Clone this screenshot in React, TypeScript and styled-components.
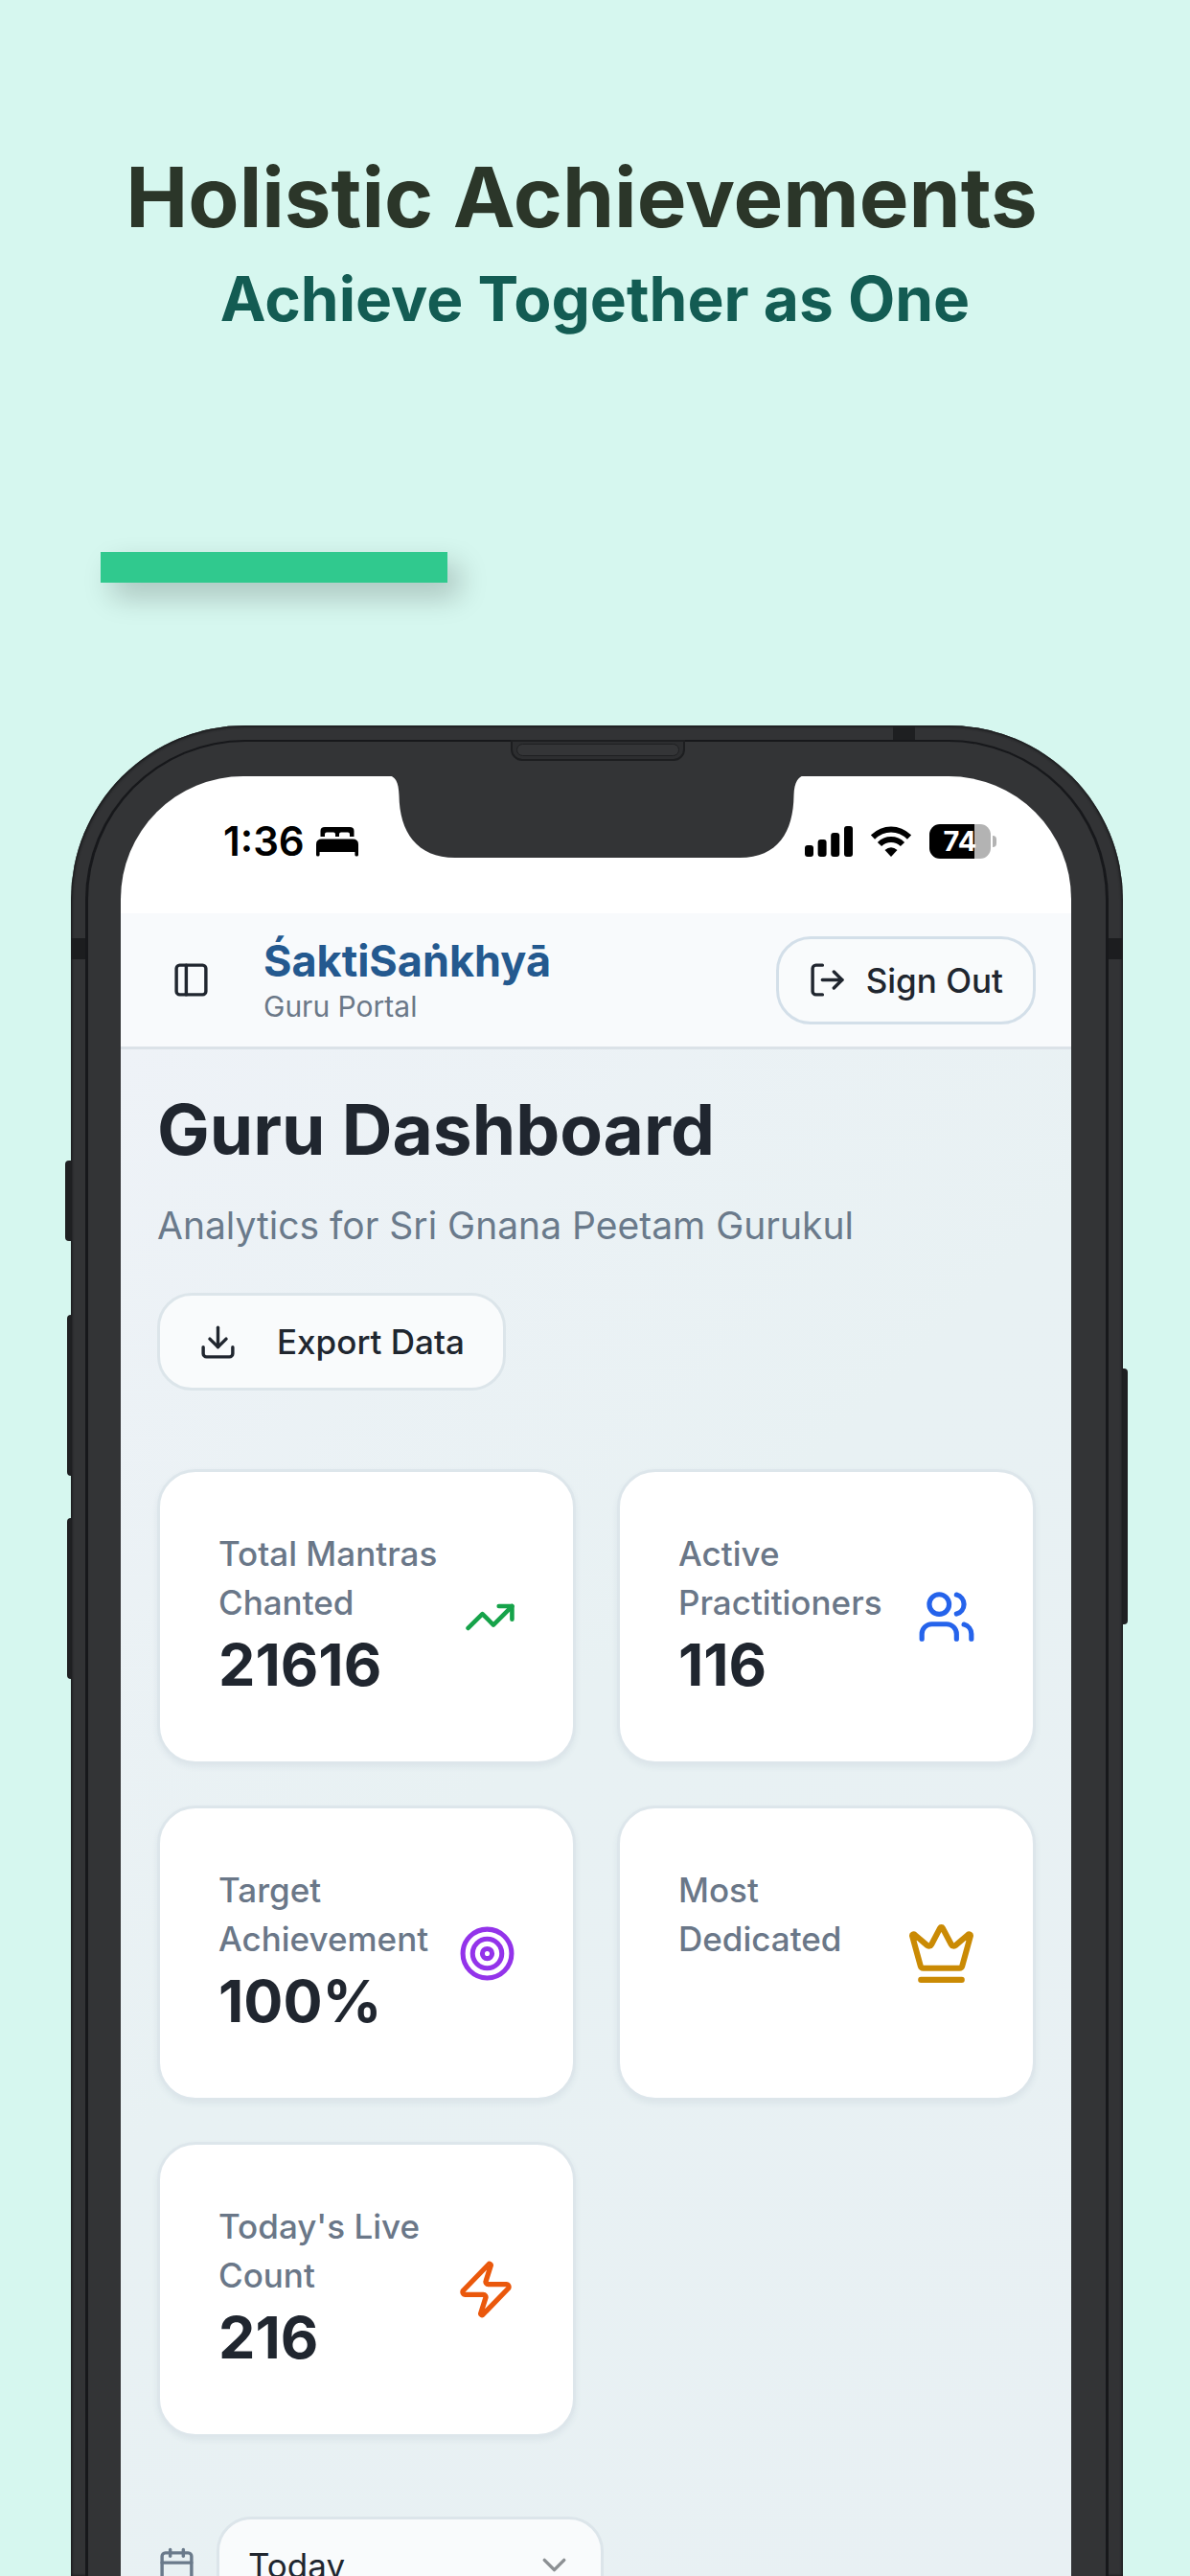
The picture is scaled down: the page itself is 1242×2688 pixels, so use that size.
import React from "react";
import styled, { createGlobalStyle } from "styled-components";
import {
  Calendar,
  ChevronDown,
  Crown,
  Download,
  LogOut,
  PanelLeft,
  Target,
  TrendingUp,
  Users,
  Zap,
  type LucideIcon,
} from "lucide-react";

const GlobalStyle = createGlobalStyle`
  * { box-sizing: border-box; }
  html, body, #root { margin: 0; height: 100%; }
  body {
    background: #d6f7ef;
    font-family: Inter, "Liberation Sans", sans-serif;
    color: #20262f;
  }
  h1, h2, p { margin: 0; }
  button, select { font: inherit; color: inherit; margin: 0; cursor: pointer; }
`;

const Page = styled.main`
  display: flex;
  flex-direction: column;
  height: 100vh;
  overflow: hidden;
  background: #d6f7ef;
`;

const Hero = styled.header`
  display: flex;
  flex-direction: column;
  align-items: center;
  padding-top: 152px;
`;

const HeroTitle = styled.h1`
  padding-right: 28px;
  font-size: 87px;
  line-height: 108px;
  font-weight: 700;
  color: #2b3629;
  white-space: nowrap;
`;

const HeroSubtitle = styled.p`
  font-size: 64px;
  line-height: 104px;
  font-weight: 700;
  color: #135c53;
  white-space: nowrap;
`;

const Accent = styled.div`
  width: 362px;
  height: 32px;
  margin: 212px 0 149px 105px;
  background: #30c98e;
  box-shadow: 12px 14px 30px rgba(0, 0, 0, 0.22);
`;

const Phone = styled.section`
  position: relative;
  flex: 1;
  min-height: 0;
  display: flex;
  margin: 0 70px 0 74px;
  padding: 15px 15px 0;
  border-radius: 182px 182px 0 0;
  background: #323335;
  box-shadow: inset 1px 1px 3px #17181a, inset -1px 0 3px #17181a;
`;

const Bezel = styled.div`
  flex: 1;
  min-width: 0;
  display: flex;
  padding: 36px 36px 0 34px;
  border: solid #17181b;
  border-width: 2px 3px 0;
  border-radius: 167px 167px 0 0;
  background: #333436;
`;

const Screen = styled.div`
  flex: 1;
  min-width: 0;
  display: flex;
  flex-direction: column;
  overflow: hidden;
  border-radius: 128px 128px 0 0;
  background: #ffffff;
`;

const SideKey = styled.span<{ $side: "left" | "right"; $top: number; $height: number; $depth: number }>`
  position: absolute;
  ${(p) => p.$side}: -${(p) => p.$depth}px;
  top: ${(p) => p.$top}px;
  width: ${(p) => p.$depth}px;
  height: ${(p) => p.$height}px;
  border-radius: ${(p) => (p.$side === "left" ? "4px 0 0 4px" : "0 4px 4px 0")};
  background: #1f2022;
`;

const SideBand = styled.span<{ $side: "left" | "right" }>`
  position: absolute;
  ${(p) => p.$side}: 0;
  top: 222px;
  width: 15px;
  height: 22px;
  background: #1c1d1f;
`;

const TopBand = styled.span`
  position: absolute;
  top: 1px;
  right: 217px;
  width: 23px;
  height: 14px;
  background: #1e1f21;
`;

const Speaker = styled.span`
  position: absolute;
  top: 15px;
  left: 50%;
  width: 182px;
  height: 22px;
  margin-left: -90px;
  border: 2px solid #1d1e20;
  border-radius: 0 0 12px 12px;
  background: #2d2e30;

  &::after {
    content: "";
    position: absolute;
    inset: 2px 4px 3px;
    border: 1px solid #1f2022;
    border-radius: 7px;
    background: #343537;
  }
`;

const Notch = styled.svg`
  position: absolute;
  top: 51px;
  left: 50%;
  width: 440px;
  height: 88px;
  margin-left: -220px;
`;

const StatusBar = styled.div`
  flex: none;
  display: flex;
  align-items: center;
  justify-content: space-between;
  height: 143px;
  padding: 0 84px 8px 107px;
  color: #000000;
`;

const StatusGroup = styled.div<{ $gap: number }>`
  display: flex;
  align-items: center;
  gap: ${(p) => p.$gap}px;
`;

const Clock = styled.span`
  font-size: 42px;
  line-height: 48px;
  font-weight: 600;
`;

const Battery = styled.span`
  position: relative;
  display: flex;
  align-items: center;
  justify-content: center;
  width: 64px;
  height: 36px;
  border-radius: 11px;
  background: linear-gradient(to right, #000000 74%, #b3b3b3 74%);
  color: #ffffff;
  font-size: 29px;
  line-height: 36px;
  font-weight: 700;

  &::after {
    content: "";
    position: absolute;
    right: -6px;
    top: 12px;
    width: 4px;
    height: 12px;
    border-radius: 0 4px 4px 0;
    background: #b3b3b3;
  }
`;

const AppBar = styled.div`
  flex: none;
  display: flex;
  align-items: center;
  justify-content: space-between;
  height: 142px;
  padding: 0 37px 0 53px;
  border-bottom: 3px solid #dbe2e8;
  background: #f8fafc;
`;

const AppBarStart = styled.div`
  display: flex;
  align-items: center;
  gap: 55px;
`;

const IconButton = styled.button`
  display: flex;
  padding: 0;
  border: 0;
  background: none;
`;

const Brand = styled.p`
  font-size: 45px;
  line-height: 54px;
  font-weight: 700;
  color: #24598f;
`;

const BrandNote = styled.p`
  font-size: 30px;
  line-height: 40px;
  color: #6b7888;
`;

const OutlineButton = styled.button<{ $height: number; $gap: number; $padding: string; $line: string }>`
  display: inline-flex;
  align-items: center;
  gap: ${(p) => p.$gap}px;
  height: ${(p) => p.$height}px;
  padding: ${(p) => p.$padding};
  border: 3px solid ${(p) => p.$line};
  border-radius: 36px;
  background: #f9fbfc;
  font-size: 35px;
  line-height: 50px;
  font-weight: 500;
  white-space: nowrap;
`;

const Content = styled.div`
  flex: 1;
  min-height: 0;
  padding: 35px 37px 0 38px;
  background: linear-gradient(135deg, #eef2f7 0%, #e8f1f3 45%, #e8f0f3 100%);
`;

const PageTitle = styled.h2`
  font-size: 73px;
  line-height: 98px;
  font-weight: 700;
`;

const PageNote = styled.p`
  margin: 22px 0 42px;
  font-size: 39px;
  line-height: 57px;
  color: #6a7a8b;
`;

const StatGrid = styled.div`
  display: grid;
  grid-template-columns: 1fr 1fr;
  gap: 43px;
  margin: 82px 0 83px;
`;

const StatCard = styled.article`
  display: flex;
  align-items: center;
  justify-content: space-between;
  gap: 12px;
  min-height: 308px;
  padding: 60px 59px 60px 61px;
  border: 3px solid #dde6eb;
  border-radius: 40px;
  background: #ffffff;
  box-shadow: 0 3px 6px rgba(60, 90, 110, 0.07);

  svg { flex: none; }
`;

const StatText = styled.div`
  align-self: flex-start;
  min-width: 0;
`;

const StatLabel = styled.p`
  font-size: 35px;
  line-height: 51px;
  font-weight: 500;
  color: #6a7788;
`;

const StatValue = styled.p`
  font-size: 61px;
  line-height: 78px;
  font-weight: 700;
`;

const FilterRow = styled.div`
  display: flex;
  align-items: center;
  gap: 21px;
  color: #6a7a8b;
`;

const SelectBox = styled.div`
  position: relative;
  width: 404px;

  svg {
    position: absolute;
    right: 31px;
    top: 30px;
    color: #8c9093;
    pointer-events: none;
  }
`;

const Select = styled.select`
  appearance: none;
  width: 100%;
  height: 102px;
  padding: 0 30px;
  border: 3px solid #dce5ea;
  border-radius: 36px;
  background: #f9fbfc;
  color: #20262f;
  font-size: 35px;
`;

const BedIcon = () => (
  <svg width="44" height="34" viewBox="0 0 44 34" fill="currentColor" aria-hidden="true">
    <path d="M4.500 12V6Q4.500 2 9 2H35Q39.500 2 39.500 6V12H35V9.500Q35 7.500 33 7.500H26Q24 7.500 24 9.500V12H20V9.500Q20 7.500 18 7.500H11Q9 7.500 9 9.500V12Z" />
    <path d="M0 20Q0 14.500 6 14.500H38Q44 14.500 44 20V31Q44 32.500 42.200 32.500T40.400 31V28H3.600V31Q3.600 32.500 1.800 32.500T0 31Z" />
  </svg>
);

const SignalIcon = () => (
  <svg width="50" height="34" viewBox="0 0 50 34" fill="currentColor" aria-hidden="true">
    <rect x="0" y="21" width="9" height="12" rx="3" />
    <rect x="13.600" y="15" width="9" height="18" rx="3" />
    <rect x="27.200" y="8" width="9" height="25" rx="3" />
    <rect x="41" y="1" width="9" height="32" rx="3" />
  </svg>
);

const WifiIcon = () => (
  <svg width="42" height="34" viewBox="0 0 42 34" fill="none" stroke="currentColor" strokeWidth="6" aria-hidden="true">
    <path d="M2 12.500Q10.500 4.500 21 4.500T40 12.500" />
    <path d="M9 20Q14 15 21 15T33 20" />
    <path d="M14.500 26Q21 20.500 27.500 26L21 33Z" fill="currentColor" stroke="none" />
  </svg>
);

type Stat = { label: string; value?: string; icon: LucideIcon; size: number; color: string };

const stats: Stat[] = [
  { label: "Total Mantras Chanted", value: "21616", icon: TrendingUp, size: 55, color: "#16a34a" },
  { label: "Active Practitioners", value: "116", icon: Users, size: 62, color: "#2563eb" },
  { label: "Target Achievement", value: "100%", icon: Target, size: 61, color: "#9333ea" },
  { label: "Most Dedicated", icon: Crown, size: 73, color: "#ca8a04" },
  { label: "Today's Live Count", value: "216", icon: Zap, size: 64, color: "#ea580c" },
];

export default function App() {
  return (
    <>
      <GlobalStyle />
      <Page>
        <Hero>
          <HeroTitle>Holistic Achievements</HeroTitle>
          <HeroSubtitle>Achieve Together as One</HeroSubtitle>
        </Hero>
        <Accent />
        <Phone>
          <SideKey $side="left" $top={454} $height={84} $depth={6} />
          <SideKey $side="left" $top={615} $height={168} $depth={4} />
          <SideKey $side="left" $top={827} $height={168} $depth={4} />
          <SideKey $side="right" $top={671} $height={267} $depth={5} />
          <SideBand $side="left" />
          <SideBand $side="right" />
          <TopBand />
          <Bezel>
            <Screen>
              <StatusBar>
                <StatusGroup $gap={12}>
                  <Clock>1:36</Clock>
                  <BedIcon />
                </StatusGroup>
                <StatusGroup $gap={19}>
                  <SignalIcon />
                  <WifiIcon />
                  <Battery>74</Battery>
                </StatusGroup>
              </StatusBar>
              <AppBar>
                <AppBarStart>
                  <IconButton type="button" aria-label="Toggle sidebar">
                    <PanelLeft size={41} />
                  </IconButton>
                  <div>
                    <Brand>ŚaktiSaṅkhyā</Brand>
                    <BrandNote>Guru Portal</BrandNote>
                  </div>
                </AppBarStart>
                <OutlineButton type="button" $height={92} $gap={20} $padding="0 31px 0 30px" $line="#d3dfe9">
                  <LogOut size={41} />
                  Sign Out
                </OutlineButton>
              </AppBar>
              <Content>
                <PageTitle>Guru Dashboard</PageTitle>
                <PageNote>Analytics for Sri Gnana Peetam Gurukul</PageNote>
                <OutlineButton type="button" $height={102} $gap={41} $padding="0 40px" $line="#dce5ea">
                  <Download size={41} />
                  Export Data
                </OutlineButton>
                <StatGrid>
                  {stats.map(({ label, value, icon: Icon, size, color }) => (
                    <StatCard key={label}>
                      <StatText>
                        <StatLabel>{label}</StatLabel>
                        {value && <StatValue>{value}</StatValue>}
                      </StatText>
                      <Icon size={size} color={color} aria-hidden="true" />
                    </StatCard>
                  ))}
                </StatGrid>
                <FilterRow>
                  <Calendar size={41} aria-hidden="true" />
                  <SelectBox>
                    <Select aria-label="Period" defaultValue="Today">
                      <option>Today</option>
                    </Select>
                    <ChevronDown size={41} aria-hidden="true" />
                  </SelectBox>
                </FilterRow>
              </Content>
            </Screen>
          </Bezel>
          <Speaker />
          <Notch viewBox="0 0 440 88" aria-hidden="true">
            <path
              d="M0 0V1C10 1 13 8 13.500 22C14 60 32 87 72 87H369C409 87 425 60 425.500 22C426 8 430 1 439 1V0Z"
              fill="#333436"
            />
          </Notch>
        </Phone>
      </Page>
    </>
  );
}
